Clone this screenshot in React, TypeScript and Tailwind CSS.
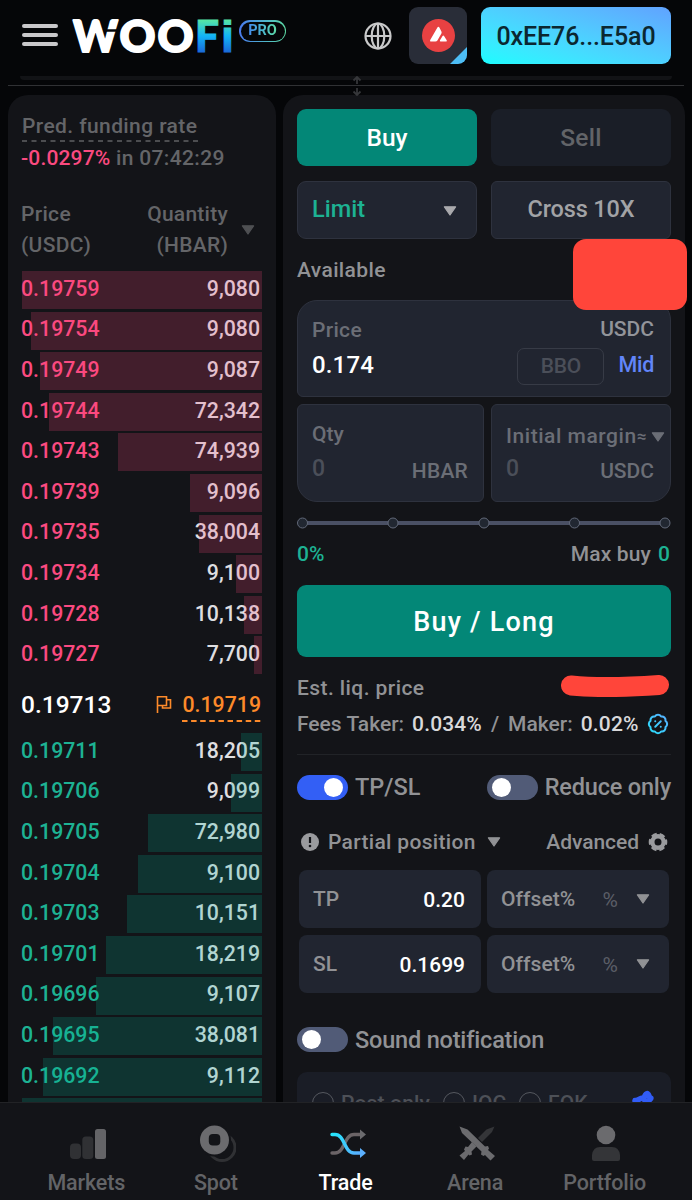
import type { ReactNode } from 'react';
import { BadgePercent } from 'lucide-react';

interface OrderLevel {
  price: string;
  quantity: string;
  depth: number;
}

const asks: OrderLevel[] = [
  { price: '0.19759', quantity: '9,080', depth: 240 },
  { price: '0.19754', quantity: '9,080', depth: 231 },
  { price: '0.19749', quantity: '9,087', depth: 222 },
  { price: '0.19744', quantity: '72,342', depth: 213 },
  { price: '0.19743', quantity: '74,939', depth: 144 },
  { price: '0.19739', quantity: '9,096', depth: 72 },
  { price: '0.19735', quantity: '38,004', depth: 63 },
  { price: '0.19734', quantity: '9,100', depth: 26 },
  { price: '0.19728', quantity: '10,138', depth: 18 },
  { price: '0.19727', quantity: '7,700', depth: 8 },
];

const bids: OrderLevel[] = [
  { price: '0.19711', quantity: '18,205', depth: 21 },
  { price: '0.19706', quantity: '9,099', depth: 31 },
  { price: '0.19705', quantity: '72,980', depth: 114 },
  { price: '0.19704', quantity: '9,100', depth: 124 },
  { price: '0.19703', quantity: '10,151', depth: 135 },
  { price: '0.19701', quantity: '18,219', depth: 156 },
  { price: '0.19696', quantity: '9,107', depth: 166 },
  { price: '0.19695', quantity: '38,081', depth: 209 },
  { price: '0.19692', quantity: '9,112', depth: 219 },
];

function Caret({ className }: { className?: string }) {
  return (
    <svg width="16" height="12" viewBox="0 0 16 12" className={className}>
      <path d="M2.400 1.800h11.200L8 10z" fill="currentColor" stroke="currentColor" strokeWidth="1.200" strokeLinejoin="round" />
    </svg>
  );
}

function Logo() {
  return (
    <svg width="162" height="36" viewBox="0 0 162 36" fontFamily="Lato, sans-serif" fontWeight="900" fontSize="43" className="overflow-visible">
      <defs>
        <linearGradient id="logo-fi" x1="0" y1="34" x2="0" y2="2" gradientUnits="userSpaceOnUse">
          <stop offset="0" stopColor="#1a6ad8" />
          <stop offset="0.5" stopColor="#12b4f6" />
          <stop offset="1" stopColor="#56e6a4" />
        </linearGradient>
      </defs>
      <g fill="#fff" stroke="#fff" strokeWidth="1.800" strokeLinejoin="round">
        <text x="1" y="33.500" textLength="45" lengthAdjust="spacingAndGlyphs">W</text>
        <text x="47.500" y="33.500" textLength="36" lengthAdjust="spacingAndGlyphs">O</text>
        <text x="85.500" y="33.500" textLength="36" lengthAdjust="spacingAndGlyphs">O</text>
      </g>
      <path d="M32 12.500h16" stroke="#050608" strokeWidth="2.500" />
      <g fill="url(#logo-fi)" stroke="url(#logo-fi)" strokeWidth="1">
        <text x="123" y="34" textLength="24" lengthAdjust="spacingAndGlyphs">F</text>
        <text x="149" y="34" fontFamily="Liberation Sans, sans-serif" fontWeight="700" fontSize="44" textLength="13" lengthAdjust="spacingAndGlyphs">i</text>
      </g>
    </svg>
  );
}

function Header() {
  return (
    <header className="flex h-[72px] shrink-0 items-start pt-[7px] pr-[21px] pl-[22px]">
      <div className="mt-[17px] flex w-9 flex-col gap-[5px]">
        <span className="h-1 rounded-full bg-[#c9c8ca]" />
        <span className="h-1 rounded-full bg-[#c9c8ca]" />
        <span className="h-1 rounded-full bg-[#c9c8ca]" />
      </div>
      <div className="mt-[11px] ml-[14px]">
        <Logo />
      </div>
      <div className="mt-[13px] ml-[5px] h-[22px] w-[47px] rounded-full bg-linear-to-r from-[#4b79ee] to-[#5edca4] p-[1.5px]">
        <div className="flex h-full items-center justify-center rounded-full bg-[#050608]">
          <span className="bg-linear-to-r from-[#4589ee] to-[#5edca4] bg-clip-text text-[14.500px] leading-none font-bold text-transparent">PRO</span>
        </div>
      </div>
      <svg width="28" height="28" viewBox="0 0 28 28" fill="none" stroke="#c9c9ca" strokeWidth="2.200" className="mt-[15px] mr-px ml-auto">
        <circle cx="14" cy="14" r="12.500" />
        <ellipse cx="14" cy="14" rx="6.300" ry="12.500" />
        <path d="M14 1.500v25M1.500 14h25" />
      </svg>
      <div className="relative ml-[16px] flex h-[57px] w-[58px] items-center justify-center overflow-hidden rounded-[9px] bg-[#292d38]">
        <svg width="33" height="33" viewBox="0 0 33 33">
          <circle cx="16.500" cy="16.500" r="16.500" fill="#e84142" />
          <path d="M15.400 8.600 Q16.400 7 17.400 8.600L19.400 12.400Q19.900 13.400 19.400 14.400L15.400 21.400Q14.700 22.500 13.400 22.500H9Q7.400 22.500 8.200 21ZM20.400 17.200Q21.300 15.900 22.200 17.200L24.700 21.200Q25.400 22.500 24 22.500H18.800Q17.300 22.500 18 21.200Z" fill="#fff" />
        </svg>
        <svg width="17" height="17" viewBox="0 0 17 17" className="absolute right-0 bottom-0">
          <path d="M17 0v17H0z" fill="#4dbdf5" />
        </svg>
      </div>
      <div className="ml-[14px] flex h-[57px] w-[190px] items-center justify-center rounded-[9px] bg-linear-to-tr from-[#17fdff] to-[#60a2ff] pt-0.5 text-[25px] leading-none font-medium tracking-[-0.004em] text-[#0b2730]">
        0xEE76...E5a0
      </div>
    </header>
  );
}

function ResizeBar() {
  return (
    <div className="relative h-[23px] shrink-0">
      <div className="mx-5 mt-1 h-1 rounded-b-full bg-[#121316]" />
      <div className="mx-2 mt-[5px] h-px bg-[#303134]" />
      <svg width="12" height="20" viewBox="0 0 12 20" fill="none" stroke="#36373a" strokeWidth="1.800" className="absolute top-1 left-[351px]">
        <path d="M6 8V1M2.500 4.500 6 1l3.500 3.500M6 12v7M2.500 15.500 6 19l3.500-3.500" />
      </svg>
    </div>
  );
}

function OrderRow({ level, side }: { level: OrderLevel; side: 'ask' | 'bid' }) {
  return (
    <div className="relative h-[40.6px] text-[21.3px] leading-none font-medium">
      <div className="-ml-px flex h-[35px] items-center justify-between pr-0.5">
        <span className={side === 'ask' ? 'text-[#fb4a80]' : 'text-[#1db293]'}>{level.price}</span>
        <span className="text-[#dedee0]">{level.quantity}</span>
      </div>
      <div
        className={`absolute top-0 right-0 h-[38px] ${side === 'ask' ? 'bg-[#ff447c]/20' : 'bg-[#00b496]/20'}`}
        style={{ width: level.depth }}
      />
    </div>
  );
}

function OrderBook() {
  return (
    <section className="h-[1007px] w-[268px] shrink-0 overflow-hidden rounded-t-[20px] bg-[#131418] px-[14px] text-[21px] leading-none font-medium text-[#646568]">
      <div className="flex h-[62px] items-end">
        <span className="relative pb-[20px] tracking-[0.019em]">
          Pred. funding rate
          <svg width="176" height="2" className="absolute bottom-[15px] left-0">
            <path d="M0 1h176" stroke="#4c4d50" strokeWidth="2" strokeDasharray="5 4.500" />
          </svg>
        </span>
      </div>
      <div className="flex h-[2px] items-center whitespace-pre">
        <span className="-ml-px tracking-[0.008em] text-[#fb4a80]">-0.0297%</span>
        <span className="tracking-[0.016em]"> in 07:42:29</span>
      </div>
      <div className="mt-[34px] mb-[5px] flex h-[73px] items-center justify-between pr-[6px]">
        <div className="-ml-px leading-[31px] tracking-[0.015em]">Price<br />(USDC)</div>
        <div className="flex items-center gap-3">
          <div className="text-right leading-[31px] tracking-[0.012em]">Quantity<br />(HBAR)</div>
          <Caret className="text-[#4f5053]" />
        </div>
      </div>
      {asks.map((level) => (
        <OrderRow key={level.price} level={level} side="ask" />
      ))}
      <div className="flex h-[56px] items-center justify-between">
        <span className="-ml-px text-[24.500px] text-white">0.19713</span>
        <div className="flex items-center gap-[10px] pr-px text-[#fd8a2a]">
          <svg width="16" height="19" viewBox="0 0 16 19" fill="none" stroke="currentColor" strokeWidth="1.600">
            <path d="M1.500 18V1.800h9v8.700h-9M10.500 4.800h4v8.200H6.500v-2.500" />
          </svg>
          <span className="relative text-[21.300px]">
            0.19719
            <svg width="79" height="2" className="absolute -bottom-[6px] left-0">
              <path d="M0 1h79" stroke="currentColor" strokeWidth="2" strokeDasharray="5.500 3.600" />
            </svg>
          </span>
        </div>
      </div>
      {bids.map((level) => (
        <OrderRow key={level.price} level={level} side="bid" />
      ))}
      <div className="h-2 bg-[#0f3431]" />
    </section>
  );
}

function Toggle({ on = false }: { on?: boolean }) {
  return (
    <span className={`flex h-[25px] w-[51px] items-center rounded-full px-[5px] ${on ? 'justify-end bg-[#335ff5]' : 'justify-start bg-[#515b77]'}`}>
      <span className="size-[19px] rounded-full bg-white" />
    </span>
  );
}

function TriggerRow({ label, value }: { label: string; value: string }) {
  return (
    <div className="flex gap-[6px] px-[2px] text-[21px]">
      <div className="flex h-[58px] w-[182px] items-center justify-between rounded-[8px] bg-[#212530] pr-4 pl-[14px]">
        <span>{label}</span>
        <span className="mt-0.5 text-white">{value}</span>
      </div>
      <div className="flex h-[58px] w-[182px] items-center rounded-[8px] bg-[#212530] pr-[18px] pl-[14px]">
        <span className="tracking-[0.004em]">Offset%</span>
        <span className="mt-0.5 ml-auto font-normal text-[#5b5e67]">%</span>
        <Caret className="ml-[17px]" />
      </div>
    </div>
  );
}

function Option({ children }: { children: ReactNode }) {
  return (
    <span className="flex items-center gap-[7px]">
      <span className="size-[22px] rounded-full border border-[#55585f]" />
      {children}
    </span>
  );
}

function OrderForm() {
  return (
    <section className="h-[1120px] w-[402px] shrink-0 rounded-[20px] bg-[#131418] px-[14px] pt-[14px] text-[21px] leading-none font-medium text-[#919295]">
      <div className="flex gap-[14px] text-[25px]">
        <div className="flex h-[57px] w-[180px] items-center justify-center rounded-[9px] bg-[#038777] pt-0.5 text-[24.500px] text-white">Buy</div>
        <div className="flex h-[57px] w-[180px] items-center justify-center rounded-[9px] bg-[#1a1e27] pt-0.5 text-[24.500px] tracking-[0.010em] text-[#626468]">Sell</div>
      </div>
      <div className="mt-[15px] flex gap-[14px] text-[23.500px]">
        <div className="flex h-[58px] w-[180px] items-center justify-between rounded-[9px] border border-[#2e323e] bg-[#212530] pr-[18px] pl-[14px]">
          <span className="text-[#1db293]">Limit</span>
          <Caret className="mt-0.5 text-[#aaaaad]" />
        </div>
        <div className="flex h-[58px] w-[180px] items-center justify-center rounded-[6px] border border-[#2e323e] bg-[#212530] tracking-[-0.006em] text-[#a2a3a6]">Cross 10X</div>
      </div>
      <div className="relative flex h-[61px] items-center pt-px tracking-[0.018em]">
        Available
        <span className="absolute top-0 -right-4 h-[71px] w-[114px] rounded-[13px] bg-[#ff453a]" />
      </div>
      <div className="flex h-[97px] flex-col rounded-[6px] rounded-t-[20px] border border-[#2e323e] bg-[#212530] px-[14px] pt-[18px]">
        <div className="flex h-[21px] items-center justify-between pr-0.5">
          <span className="pt-px tracking-[0.015em] text-[#6b6e76]">Price</span>
          <span className="text-[#92949a]">USDC</span>
        </div>
        <div className="mt-[7px] flex h-[38px] items-center">
          <span className="mb-[2px] text-[24px] tracking-[0.006em] text-white">0.174</span>
          <span className="ml-auto flex h-[37px] w-[87px] items-center justify-center rounded-[7px] border border-[#373b46] tracking-[-0.010em] text-[#4b4f59]">BBO</span>
          <span className="mr-0.5 mb-0.5 ml-[14px] text-[21.500px] tracking-[-0.012em] text-[#6285fa]">Mid</span>
        </div>
      </div>
      <div className="mt-[7px] flex gap-[7px] text-[#6b6e76]">
        <div className="h-[98px] w-[187px] rounded-[6px] rounded-bl-[20px] border border-[#2e323e] bg-[#212530] px-[14px] pt-[19px]">
          <div>Qty</div>
          <div className="mt-[11px] flex h-[28px] items-start justify-between pr-px">
            <span className="pt-px text-[23px] text-[#4b4f59]">0</span>
            <span className="mt-[5px] tracking-[0.010em]">HBAR</span>
          </div>
        </div>
        <div className="h-[98px] w-[180px] rounded-[6px] rounded-br-[20px] border border-[#2e323e] bg-[#212530] pt-[21px] pl-[14px]">
          <div className="flex items-center whitespace-nowrap">
            <span className="tracking-[0.026em]">Initial margin</span>
            <span className="text-[17px]">≈</span>
            <Caret className="ml-[4px] shrink-0" />
          </div>
          <div className="mt-[9px] flex h-[28px] items-start justify-between pr-4">
            <span className="pt-px text-[23px] text-[#4b4f59]">0</span>
            <span className="mt-[5px]">USDC</span>
          </div>
        </div>
      </div>
      <svg width="374" height="14" viewBox="0 0 374 14" className="mt-[14px] block">
        <path d="M6 7h362" stroke="#4a5064" strokeWidth="4" />
        {[5.5, 96, 187, 277.5, 368].map((x) => (
          <circle key={x} cx={x} cy="7" r="5" fill="#212731" stroke="#626979" />
        ))}
      </svg>
      <div className="flex h-[48px] items-center justify-between pt-px pr-px">
        <span className="text-[#1db293]">0%</span>
        <span className="flex gap-[7px]"><span className="tracking-[0.008em]">Max buy</span><span className="text-[#1db293]">0</span></span>
      </div>
      <div className="mt-[7px] flex h-[72px] items-center justify-center rounded-[9px] bg-[#038777] pt-[3px] text-[27px] tracking-[0.045em] text-white">Buy / Long</div>
      <div className="mt-[13px] flex h-9 items-center justify-between tracking-[0.020em]">
        <span>Est. liq. price</span>
        <svg width="110" height="22" viewBox="0 0 110 22" className="mb-1">
          <path d="M10 10.500C35 13 70 12 98 10" stroke="#ff453a" strokeWidth="20" strokeLinecap="round" fill="none" />
        </svg>
      </div>
      <div className="flex h-9 items-center whitespace-nowrap">
        <span>Fees Taker:</span>
        <span className="ml-2 tracking-[0.006em] text-[#d9d9db]">0.034%</span>
        <span className="ml-[9px]">/</span>
        <span className="ml-[9px]">Maker:</span>
        <span className="ml-2 tracking-[0.008em] text-[#d9d9db]">0.02%</span>
        <svg width="0" height="0">
          <linearGradient id="fee-badge" x1="0" y1="24" x2="24" y2="0" gradientUnits="userSpaceOnUse">
            <stop offset="0" stopColor="#23e4fa" />
            <stop offset="1" stopColor="#5fa8ff" />
          </linearGradient>
        </svg>
        <BadgePercent size={22} stroke="url(#fee-badge)" strokeWidth={2.2} className="mr-0.5 ml-auto" />
      </div>
      <div className="mt-[12px] h-px bg-[#212327]" />
      <div className="mt-[20px] flex h-[25px] items-center text-[24px]">
        <Toggle on />
        <span className="ml-[7px] text-[23.500px]">TP/SL</span>
        <span className="ml-auto"><Toggle /></span>
        <span className="ml-[7px] text-[23.500px] tracking-[-0.008em]">Reduce only</span>
      </div>
      <div className="mt-[28px] flex h-[28px] items-center">
        <svg width="18" height="18" viewBox="0 0 18 18" className="ml-1">
          <circle cx="9" cy="9" r="9" fill="#9a9b9e" />
          <path d="M9 4v6" stroke="#131418" strokeWidth="2.200" />
          <circle cx="9" cy="13" r="1.300" fill="#131418" />
        </svg>
        <span className="ml-[9px] tracking-[0.015em]">Partial position</span>
        <Caret className="ml-[10px]" />
        <span className="ml-auto tracking-[-0.002em]">Advanced</span>
        <svg width="20" height="20" viewBox="0 0 20 20" className="mr-[3px] ml-[9px]" fill="none" stroke="#9a9b9e">
          <circle cx="10" cy="10" r="5.700" strokeWidth="4.400" />
          <circle cx="10" cy="10" r="7.700" strokeWidth="3.200" strokeDasharray="5.200 2.860" strokeDashoffset="2.600" />
        </svg>
      </div>
      <div className="mt-[14px] flex flex-col gap-[7px]">
        <TriggerRow label="TP" value="0.20" />
        <TriggerRow label="SL" value="0.1699" />
      </div>
      <div className="mt-[34px] flex h-[25px] items-center text-[23.500px]">
        <Toggle />
        <span className="ml-[7px] pt-0.5 tracking-[-0.008em]">Sound notification</span>
      </div>
      <div className="mt-[20px] flex h-[62px] items-center gap-[13px] rounded-[10px] bg-[#1a1d26] pr-4 pl-[15px] text-[#4d5057]">
        <Option><span className="tracking-[0.008em]">Post only</span></Option>
        <Option>IOC</Option>
        <Option>FOK</Option>
        <svg width="24" height="28" viewBox="0 0 24 28" className="ml-auto">
          <path d="M4 11.500C8 12 8 9 12 9C14 9 13.500 5 16.500 4.500C19 6 17 8 20 9C20 11 17 12 14 13" fill="none" stroke="#315cf7" strokeWidth="5.500" strokeLinecap="round" strokeLinejoin="round" />
        </svg>
      </div>
    </section>
  );
}

function NavItem({ label, active = false, children }: { label: string; active?: boolean; children: ReactNode }) {
  return (
    <div className={`flex w-[129.600px] flex-col items-center gap-[10px] text-[21.500px] leading-none font-medium ${active ? 'text-white' : 'text-[#636467]'}`}>
      <svg width="40" height="40" viewBox="0 0 40 40">{children}</svg>
      <span className="tracking-[-0.006em]">{label}</span>
    </div>
  );
}

function BottomNav() {
  return (
    <nav className="relative flex h-[98px] shrink-0 justify-center border-t border-[#222326] bg-[#131418] pt-[19px] pr-px">
      <NavItem label="Markets">
        <rect x="4" y="21.500" width="11" height="15.500" rx="4" fill="#303134" />
        <rect x="16.300" y="14.500" width="11" height="22.500" rx="3.500" fill="#303134" />
        <rect x="29" y="7" width="11" height="30" rx="2.500" fill="#646467" />
      </NavItem>
      <NavItem label="Spot">
        <circle cx="26" cy="25.500" r="13" fill="none" stroke="#303134" strokeWidth="3" />
        <circle cx="18.500" cy="18" r="16.500" fill="#131418" />
        <circle cx="18.500" cy="18" r="14.500" fill="#6b6b6e" />
        <rect x="12.800" y="12" width="11.500" height="11.500" rx="4" fill="#131418" />
      </NavItem>
      <NavItem label="Trade" active>
        <defs>
          <linearGradient id="nav-trade" x1="4" y1="12" x2="38" y2="32" gradientUnits="userSpaceOnUse">
            <stop offset="0" stopColor="#22e8fb" />
            <stop offset="1" stopColor="#5fa8ff" />
          </linearGradient>
        </defs>
        <g fill="none" strokeWidth="3.400" strokeLinecap="round">
          <path d="M6 31H9C19 31 18 12.500 28 12.500H35" stroke="#6b6467" />
          <path d="M6 12.500H9C19 12.500 18 31 28 31H35" stroke="url(#nav-trade)" />
        </g>
        <path d="M34 7.500v10l6-5z" fill="#6b6b6e" />
        <path d="M34 26v10l6-5z" fill="#5cb0fd" />
      </NavItem>
      <NavItem label="Arena">
        <path d="M39.500 4.500L31.500 7.500 23 16l4 4 10-10z" fill="#343538" />
        <path d="M17 20l4.500 4.500-5 5 .5 3-2.500 1-1-1-4.500 5.500-4.500-4.500 5.500-4.500-1-1.500 1.500-3 2.500.5z" fill="#6b6b6e" />
        <path d="M4.500 4.500L12.500 7.500 30 24.500l3-.5 1 2.500-1 1.500 7 6-4.500 4.500-5.500-5.500-1.500 1-2.500-1.500.5-3L7 11z" fill="#6b6b6e" />
      </NavItem>
      <NavItem label="Portfolio">
        <circle cx="21" cy="13" r="9.300" fill="#6b6b6e" />
        <path d="M7 37v-4Q8 25 15 25h12q7 0 8 8v4q0 2-2 2H9q-2 0-2-2z" fill="#343538" />
      </NavItem>
    </nav>
  );
}

export default function App() {
  return (
    <div className="flex h-[1200px] w-[692px] flex-col overflow-hidden bg-[#050608] font-[Roboto,sans-serif]">
      <Header />
      <ResizeBar />
      <main className="flex min-h-0 flex-1 items-start gap-[7px] overflow-hidden px-2">
        <OrderBook />
        <OrderForm />
      </main>
      <BottomNav />
    </div>
  );
}
